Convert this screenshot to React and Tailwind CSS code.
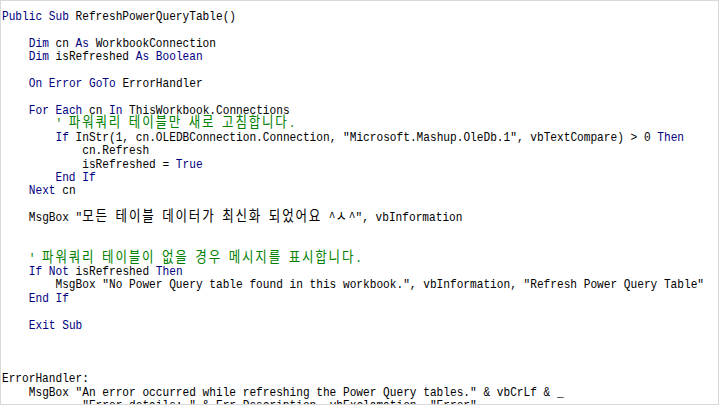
import React from 'react';

const KEYWORDS = new Set([
  'Public', 'Sub', 'Dim', 'As', 'Boolean', 'On', 'Error', 'GoTo', 'For', 'Each',
  'In', 'If', 'Then', 'End', 'Next', 'Not', 'True', 'Exit',
]);

const code = [
  'Public Sub RefreshPowerQueryTable()',
  '',
  '    Dim cn As WorkbookConnection',
  '    Dim isRefreshed As Boolean',
  '',
  '    On Error GoTo ErrorHandler',
  '',
  '    For Each cn In ThisWorkbook.Connections',
  "        ' 파워쿼리 테이블만 새로 고침합니다.",
  '        If InStr(1, cn.OLEDBConnection.Connection, "Microsoft.Mashup.OleDb.1", vbTextCompare) > 0 Then',
  '            cn.Refresh',
  '            isRefreshed = True',
  '        End If',
  '    Next cn',
  '',
  '    MsgBox "모든 테이블 데이터가 최신화 되었어요 ^ㅅ^", vbInformation',
  '',
  '',
  "    ' 파워쿼리 테이블이 없을 경우 메시지를 표시합니다.",
  '    If Not isRefreshed Then',
  '        MsgBox "No Power Query table found in this workbook.", vbInformation, "Refresh Power Query Table"',
  '    End If',
  '',
  '    Exit Sub',
  '',
  '',
  '',
  'ErrorHandler:',
  '    MsgBox "An error occurred while refreshing the Power Query tables." & vbCrLf & _',
  '            "Error details: " & Err.Description, vbExclamation, "Error"',
  'End Sub',
];

// hangul glyphs are full width (two mono cells); small leading keeps the line box from growing
const Text = ({ text }) =>
  text.split(/([\u1100-\u11FF\u3130-\u318F\uAC00-\uD7AF]+)/).map((part, i) =>
    i % 2 === 1 ? (
      <span key={i} className="font-['Noto_Sans_CJK_KR',sans-serif] text-[15px] leading-[7px] tracking-[2.2px]">
        {part}
      </span>
    ) : (
      part
    )
  );

const CodeLine = ({ line }) => {
  if (line.trim().startsWith("'")) {
    return (
      <span className="text-[#008000]">
        <Text text={line} />
      </span>
    );
  }
  const tokens = line.match(/"[^"]*"|[A-Za-z_][A-Za-z0-9_]*|[^"A-Za-z_]+/g) || [];
  return tokens.map((tok, i) =>
    KEYWORDS.has(tok) ? (
      <span key={i} className="text-[#000080]">{tok}</span>
    ) : (
      <Text key={i} text={tok} />
    )
  );
};

export default function App() {
  return (
    <div className="w-[720px] h-[405px] bg-white overflow-hidden">
      <div className="w-[719px] h-[405px] border border-[#d9d9d9] overflow-hidden pt-[9px] pl-[1px]">
        <div className="origin-top-left scale-x-[0.832] font-['Liberation_Mono',monospace] text-[13.4px] leading-[13.43px] text-black">
          {code.map((line, i) => (
            <div key={i} className="h-[13.43px] whitespace-pre">
              <CodeLine line={line} />
            </div>
          ))}
        </div>
      </div>
    </div>
  );
}
